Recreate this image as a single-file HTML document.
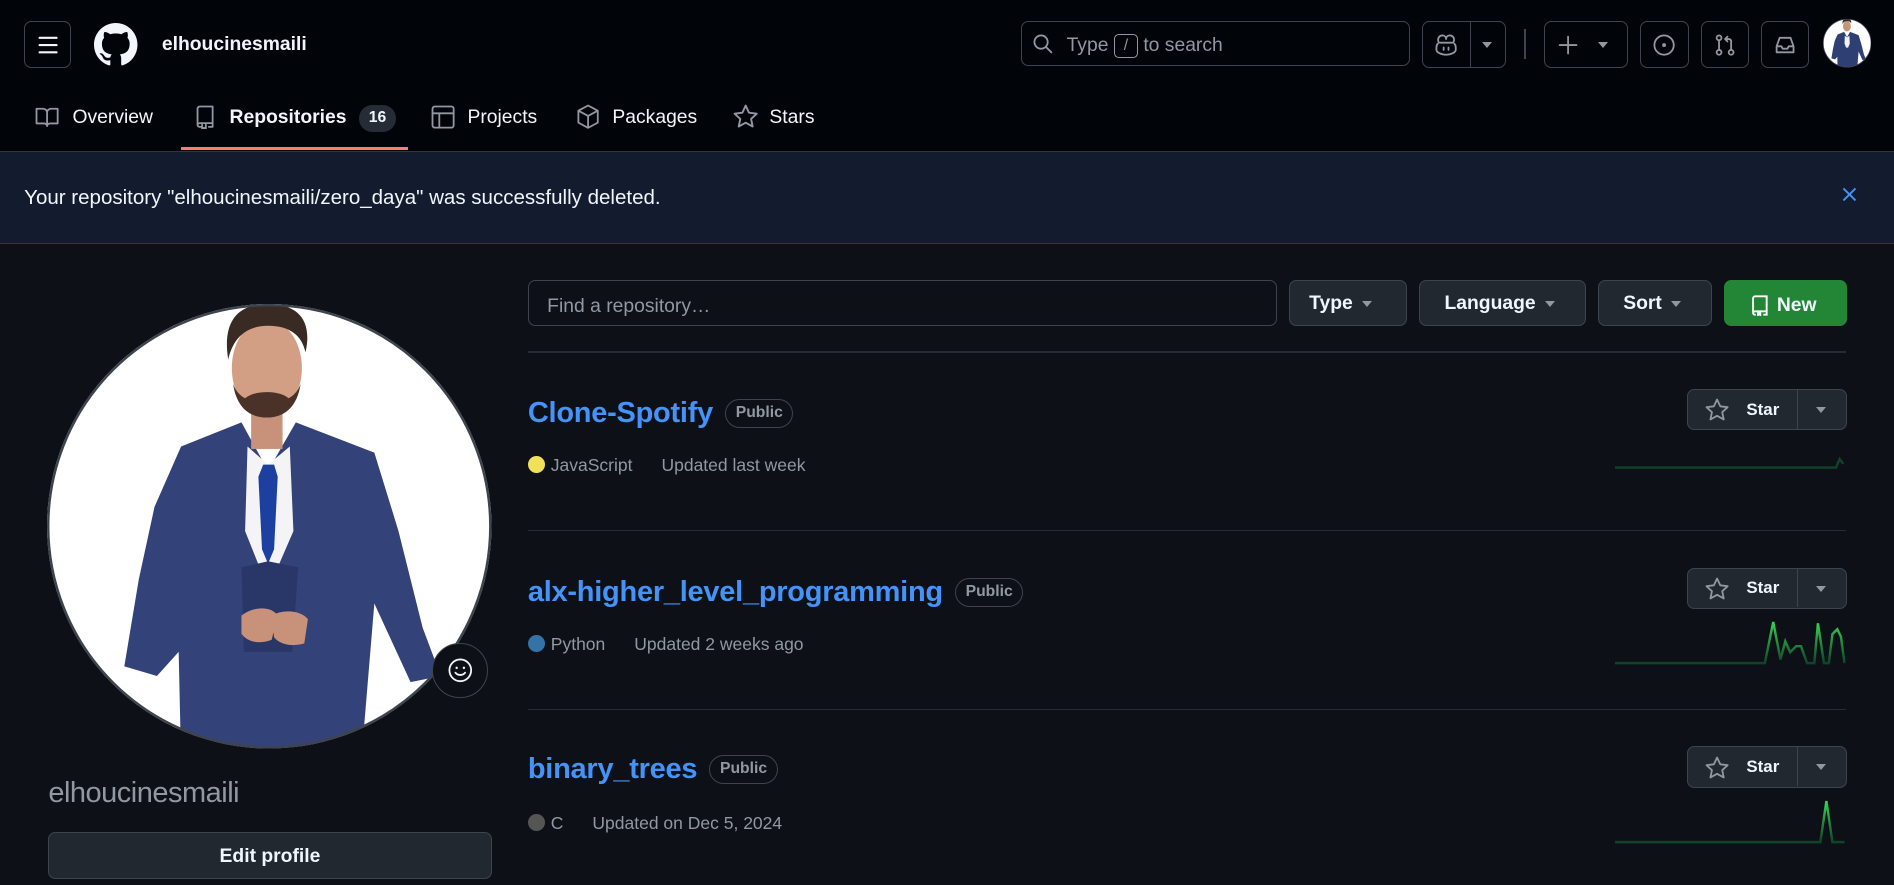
<!DOCTYPE html>
<html><head><meta charset="utf-8"><style>
html{zoom:1.2079}
*{box-sizing:border-box;margin:0;padding:0}
body{width:1568px;height:733px;overflow:hidden;background:#0d1117;font-family:"Liberation Sans",sans-serif;color:#f0f6fc;position:relative}
.abs{position:absolute}
.hdr{position:absolute;left:0;top:0;width:1568px;height:126px;background:#010409;border-bottom:1px solid #30363d}
.btn{position:absolute;border:1px solid #3d444d;border-radius:6px}
.ic{stroke:#9198a1;fill:none;stroke-width:1.5;stroke-linecap:round;stroke-linejoin:round}
.tab{position:absolute;top:88px;font-size:16px;color:#f0f6fc;height:20px;line-height:20px}
.banner{position:absolute;left:0;top:126px;width:1568px;height:76px;background:#131c2e;border-bottom:1px solid #1f3a5f}
.gbtn{position:absolute;top:232px;height:38px;background:#212830;border:1px solid #3d444d;border-radius:6px;font-size:16px;font-weight:bold;color:#f0f6fc;line-height:38px;padding-left:16px}
.caret{display:inline-block;width:0;height:0;border-left:4.5px solid transparent;border-right:4.5px solid transparent;border-top:5px solid #9198a1;vertical-align:middle;margin-left:8px}
.hr{position:absolute;left:437px;width:1091px;height:1px;background:#262c36}
.title{position:absolute;left:437px;font-size:24px;font-weight:bold;color:#4493f8;height:30px;line-height:30px;letter-spacing:-.2px}
.pub{display:inline-block;vertical-align:4px;margin-left:10px;border:1px solid #3d444d;border-radius:12px;font-size:13px;font-weight:bold;color:#9198a1;padding:0 8px;height:24px;line-height:22px;letter-spacing:0}
.meta{position:absolute;left:437px;font-size:14.5px;color:#9198a1;height:20px;line-height:20px}
.dot{display:inline-block;width:14px;height:14px;border-radius:50%;vertical-align:-2px;margin-right:5px}
.star{position:absolute;left:1397px;width:132px;height:34px;background:#212830;border:1px solid #3d444d;border-radius:6px}
.star .sep{position:absolute;left:90px;top:0;width:1px;height:32px;background:#3d444d}
.star span{position:absolute;left:48px;top:8px;font-size:14px;font-weight:bold}
.star .caret{position:absolute;left:106px;top:14px;margin:0}
</style></head><body>
<div class="hdr"></div>
<div class="btn" style="left:20px;top:17px;width:39px;height:39px"></div>
<svg class="abs" style="left:30px;top:27px" width="20" height="20"><path class="ic" d="M3 4h14M3 10h14M3 16h14" style="stroke:#f0f6fc;stroke-width:1.8"/></svg>
<svg class="abs" style="left:78px;top:19px" width="36" height="36" viewBox="0 0 16 16"><path fill="#f0f6fc" d="M8 0C3.58 0 0 3.58 0 8c0 3.540 2.29 6.53 5.47 7.59.4.07.55-.17.55-.38 0-.19-.01-.82-.01-1.49-2.01.37-2.530-.49-2.690-.94-.09-.23-.48-.94-.82-1.13-.28-.15-.68-.52-.01-.53.63-.01 1.08.58 1.23.82.72 1.21 1.87.87 2.33.66.07-.52.28-.87.51-1.070-1.78-.2-3.64-.89-3.64-3.95 0-.87.31-1.59.82-2.15-.08-.2-.36-1.02.08-2.12 0 0 .67-.21 2.2.82.64-.18 1.32-.27 2-.27.68 0 1.36.09 2 .27 1.53-1.04 2.2-.82 2.2-.82.44 1.1.16 1.92.08 2.12.51.56.82 1.27.82 2.15 0 3.07-1.87 3.75-3.65 3.95.29.25.54.73.54 1.48 0 1.07-.01 1.93-.01 2.2 0 .21.15.46.55.38A8.013 8.013 0 0016 8c0-4.42-3.58-8-8-8z"/></svg>
<div class="abs" style="left:134px;top:27px;font-size:16px;font-weight:bold;line-height:20px">elhoucinesmaili</div>
<div class="btn" style="left:845px;top:17px;width:322px;height:38px"></div>
<svg class="abs" style="left:854px;top:27px" width="18" height="18"><circle class="ic" cx="7.5" cy="7.5" r="5.5"/><path class="ic" d="M11.5 11.5l4.5 4.5"/></svg>
<div class="abs" style="left:883px;top:28px;font-size:16px;color:#9198a1;line-height:20px">Type <span style="display:inline-block;border:1px solid #9198a1;border-radius:4px;width:20px;height:20px;line-height:18px;text-align:center;font-size:13px;vertical-align:1px">/</span> to search</div>
<div class="btn" style="left:1177px;top:17px;width:70px;height:39px"></div>
<div class="abs" style="left:1217px;top:17px;width:1px;height:39px;background:#3d444d"></div>
<svg class="abs" style="left:1187px;top:27px" width="20" height="20" viewBox="0 0 20 20"><path class="ic" d="M4 8c-1.5-3 0-6 3-6 2 0 3 1.5 3 3 0-1.5 1-3 3-3 3 0 4.5 3 3 6M3 9c0 0-1 1-1 3v2c0 2 4 4 8 4s8-2 8-4v-2c0-2-1-3-1-3M5 8h10M8 12v2M12 12v2"/></svg>
<div class="abs caret" style="left:1227px;top:35px;margin:0"></div>
<div class="abs" style="left:1262px;top:24px;width:1px;height:25px;background:#3d444d"></div>
<div class="btn" style="left:1278px;top:17px;width:70px;height:39px"></div>
<svg class="abs" style="left:1288px;top:27px" width="20" height="20"><path class="ic" d="M10 3v14M3 10h14"/></svg>
<div class="abs caret" style="left:1323px;top:35px;margin:0"></div>
<div class="btn" style="left:1358px;top:17px;width:40px;height:39px"></div>
<svg class="abs" style="left:1368px;top:27px" width="20" height="20"><circle class="ic" cx="10" cy="10" r="8"/><circle cx="10" cy="10" r="1.6" fill="#9198a1"/></svg>
<div class="btn" style="left:1408px;top:17px;width:40px;height:39px"></div>
<svg class="abs" style="left:1418px;top:27px" width="20" height="20"><circle class="ic" cx="5" cy="4" r="2"/><circle class="ic" cx="5" cy="16" r="2"/><circle class="ic" cx="15" cy="16" r="2"/><path class="ic" d="M5 6v8M15 14V7c0-1.5-1-2-2-2H10M12 3L10 5l2 2"/></svg>
<div class="btn" style="left:1458px;top:17px;width:40px;height:39px"></div>
<svg class="abs" style="left:1468px;top:27px" width="20" height="20"><path class="ic" d="M3 11l2.5-7h9L17 11v5H3zM3 11h4l1 2h4l1-2h4"/></svg>
<svg class="abs" style="left:1509px;top:16px" width="40" height="40" viewBox="39 252 368 368"><defs><clipPath id="c2"><circle cx="223" cy="436" r="184"/></clipPath></defs><circle cx="223" cy="436" r="184" fill="#fff"/><g clip-path="url(#c2)"><path fill="#2e3f73" d="M150 370L200 350 222 390 245 350 310 375 330 440 350 520 365 560 340 565 310 500 300 620 250 630 150 630 148 540 130 560 103 552 115 480 128 420z"/><path fill="#f2f2f4" d="M205 380L222 392 240 380 243 440 230 470 215 470 203 440z"/><ellipse cx="221" cy="307" rx="30" ry="40" fill="#c89478"/><path fill="#3a2a24" d="M188 292c-4-30 8-42 33-42s37 12 32 36c-5-14-15-18-32-18s-28 8-33 24z"/></g><circle cx="223" cy="436" r="182" fill="none" stroke="#3d444d" stroke-width="6"/></svg>
<svg class="abs" style="left:29px;top:87px" width="20" height="20" viewBox="0 0 16 16"><path class="ic" style="stroke-width:1.2" d="M1 2.5h4.5c1.3 0 2.5 1 2.5 2.5v9c0-1-1-1.8-2-1.8H1zM15 2.5h-4.5C9.2 2.5 8 3.5 8 5v9c0-1 1-1.8 2-1.8h5z"/></svg>
<div class="tab" style="left:60px">Overview</div>
<svg class="abs" style="left:160px;top:87px" width="20" height="20" viewBox="0 0 16 16"><path class="ic" style="stroke-width:1.2" d="M3 13V2.5C3 1.7 3.7 1 4.5 1H13v11H4.5C3.7 12 3 12.6 3 13.3S3.7 14.5 4.5 14.5H5M13 12v2.5h-2.5M6 13v3l1.25-1 1.25 1v-3"/></svg>
<div class="tab" style="left:190px;font-weight:bold">Repositories</div>
<div class="abs" style="left:297px;top:87px;width:31px;height:22px;border-radius:11px;background:#262c36;font-size:13px;font-weight:bold;text-align:center;line-height:22px">16</div>
<div class="abs" style="left:150px;top:122px;width:188px;height:2px;background:#f78166"></div>
<svg class="abs" style="left:357px;top:87px" width="20" height="20" viewBox="0 0 16 16"><rect class="ic" style="stroke-width:1.2" x="1" y="1" width="14" height="14" rx="1.5"/><path class="ic" style="stroke-width:1.2" d="M1 5.5h14M5.5 5.5V15"/></svg>
<div class="tab" style="left:387px">Projects</div>
<svg class="abs" style="left:477px;top:86px" width="20" height="21" viewBox="0 0 16 17"><path class="ic" style="stroke-width:1.2" d="M8 1l6.5 3.5v8L8 16l-6.5-3.5v-8zM1.5 4.5L8 8l6.5-3.5M8 8v8"/></svg>
<div class="tab" style="left:507px">Packages</div>
<svg class="abs" style="left:607px;top:86px" width="21" height="21" viewBox="0 0 16 16"><path class="ic" style="stroke-width:1.2" d="M8 1l2.1 4.5 4.9.6-3.6 3.3 1 4.8L8 11.8l-4.4 2.4 1-4.8L1 6.1l4.9-.6z"/></svg>
<div class="tab" style="left:637px">Stars</div>
<div class="banner"></div>
<div class="abs" style="left:20px;top:154px;font-size:17px;line-height:20px">Your repository "elhoucinesmaili/zero_daya" was successfully deleted.</div>
<svg class="abs" style="left:1524px;top:154px" width="14" height="14"><path d="M2 2l10 10M12 2L2 12" stroke="#4493f8" stroke-width="1.6"/></svg>
<svg class="abs" style="left:39px;top:252px" width="370" height="370" viewBox="39 252 370 370"><defs><clipPath id="c1"><circle cx="223" cy="436" r="184"/></clipPath></defs><circle cx="223" cy="436" r="184" fill="#fff"/><g clip-path="url(#c1)">
<path fill="#34427a" d="M150 370L200 350 222 390 245 350 310 375 330 440 350 520 365 560 340 565 310 500 300 620 250 630 150 630 148 540 130 560 103 552 115 480 128 420z"/>
<path fill="#f4f4f7" d="M205 370L222 385 240 370 243 440 230 470 215 470 203 440z"/>
<path fill="#1c3fa0" d="M218 385h9l3 10-3 60-5 12-5-12-3-60z"/>
<path fill="#283768" d="M200 470l22 -5 25 5-5 70h-40z"/>
<rect x="208" y="330" width="26" height="42" fill="#c8927a"/>
<ellipse cx="221" cy="305" rx="29" ry="40" fill="#d29e84"/>
<path fill="#4a3228" d="M193 318c3 20 14 28 28 28s25-8 28-28c-2 6-6 10-10 12-5-4-12-5-18-5s-13 1-18 5c-4-2-8-6-10-12z"/>
<path fill="#3a2a24" d="M189 298c-5-32 8-46 33-46s37 14 31 40c-3-14-13-22-31-22s-29 10-33 28z"/>
<path fill="#c8927a" d="M200 510c10-8 25-8 30 0l-5 20c-10 4-20 2-25-5zM225 510c10-6 25-4 30 3l-3 20c-10 3-20 1-25-5z"/>
</g><circle cx="223" cy="436" r="183" fill="none" stroke="#3d444d" stroke-width="2"/></svg>
<div class="abs" style="left:358px;top:532px;width:46px;height:46px;border-radius:50%;background:#0d1117;border:1px solid #3d444d"></div>
<svg class="abs" style="left:370px;top:544px" width="22" height="22"><circle class="ic" cx="11" cy="11" r="9" style="stroke:#f0f6fc"/><path class="ic" style="stroke:#f0f6fc" d="M7 13c2 2.5 6 2.5 8 0"/><circle cx="8" cy="9" r="1" fill="#f0f6fc"/><circle cx="14" cy="9" r="1" fill="#f0f6fc"/></svg>
<div class="abs" style="left:40px;top:643px;font-size:24px;font-weight:300;color:#9198a1;line-height:28px;letter-spacing:-.4px">elhoucinesmaili</div>
<div class="abs" style="left:40px;top:689px;width:367px;height:39px;background:#212830;border:1px solid #3d444d;border-radius:6px;text-align:center;font-size:16px;font-weight:bold;line-height:40px">Edit profile</div>
<div class="abs" style="left:437px;top:232px;width:620px;height:38px;border:1px solid #3d444d;border-radius:6px;background:#0d1117"></div>
<div class="abs" style="left:453px;top:244px;font-size:16px;color:#9198a1;line-height:20px">Find a repository…</div>
<div class="gbtn" style="left:1067px;width:98px">Type<span class="caret"></span></div>
<div class="gbtn" style="left:1175px;width:138px;padding-left:20px">Language<span class="caret"></span></div>
<div class="gbtn" style="left:1323px;width:94px;padding-left:20px">Sort<span class="caret"></span></div>
<div class="abs" style="left:1427px;top:232px;width:102px;height:38px;background:#238636;border-radius:6px"></div>
<svg class="abs" style="left:1448px;top:244px" width="18" height="18" viewBox="0 0 16 16"><path d="M3 13V2.5C3 1.7 3.7 1 4.5 1H13v11H4.5C3.7 12 3 12.6 3 13.3S3.7 14.5 4.5 14.5H5M13 12v2.5h-2.5" fill="none" stroke="#fff" stroke-width="1.4"/><path d="M6 12.5h3v3.5l-1.5-1-1.5 1z" fill="#fff"/></svg>
<div class="abs" style="left:1471px;top:243px;font-size:16px;font-weight:bold;line-height:20px">New</div>
<div class="hr" style="top:291px"></div>
<div class="title" style="top:327px">Clone-Spotify<span class="pub">Public</span></div>
<div class="meta" style="top:375px"><span class="dot" style="background:#f1e05a"></span>JavaScript<span style="margin-left:24px">Updated last week</span></div>
<div class="star" style="top:322px"><svg class="abs" style="left:14px;top:7px" width="20" height="20" viewBox="0 0 16 16"><path class="ic" style="stroke-width:1.2" d="M8 1l2.1 4.5 4.9.6-3.6 3.3 1 4.8L8 11.8l-4.4 2.4 1-4.8L1 6.1l4.9-.6z"/></svg><span>Star</span><div class="sep"></div><div class="caret"></div></div>
<svg class="abs" style="left:1337px;top:370px" width="192" height="22"><polyline points="0,17 183,17 186,10 189,14" fill="none" stroke="#0e4429" stroke-width="2"/></svg>
<div class="hr" style="top:439px"></div>
<div class="title" style="top:475px">alx-higher_level_programming<span class="pub">Public</span></div>
<div class="meta" style="top:523px"><span class="dot" style="background:#3572a5"></span>Python<span style="margin-left:24px">Updated 2 weeks ago</span></div>
<div class="star" style="top:470px"><svg class="abs" style="left:14px;top:7px" width="20" height="20" viewBox="0 0 16 16"><path class="ic" style="stroke-width:1.2" d="M8 1l2.1 4.5 4.9.6-3.6 3.3 1 4.8L8 11.8l-4.4 2.4 1-4.8L1 6.1l4.9-.6z"/></svg><span>Star</span><div class="sep"></div><div class="caret"></div></div>
<svg class="abs" style="left:1337px;top:510px" width="192" height="42"><defs><linearGradient id="g" x1="0" y1="0" x2="0" y2="1"><stop offset="0" stop-color="#39d353"/><stop offset="1" stop-color="#0e4429"/></linearGradient></defs><polyline points="0,39 124,39 131,5 137,36 141,21 145,30 150,25 154,25 159,39 165,39 168,6 173,39 177,39 180,15 184,11 187,17 190,39" fill="none" stroke="url(#g)" stroke-width="2"/></svg>
<div class="hr" style="top:587px"></div>
<div class="title" style="top:622px">binary_trees<span class="pub">Public</span></div>
<div class="meta" style="top:671px"><span class="dot" style="background:#555"></span>C<span style="margin-left:24px">Updated on Dec 5, 2024</span></div>
<div class="star" style="top:618px"><svg class="abs" style="left:14px;top:7px" width="20" height="20" viewBox="0 0 16 16"><path class="ic" style="stroke-width:1.2" d="M8 1l2.1 4.5 4.9.6-3.6 3.3 1 4.8L8 11.8l-4.4 2.4 1-4.8L1 6.1l4.9-.6z"/></svg><span>Star</span><div class="sep"></div><div class="caret"></div></div>
<svg class="abs" style="left:1337px;top:658px" width="192" height="42"><defs><linearGradient id="g3" x1="0" y1="0" x2="0" y2="1"><stop offset="0" stop-color="#39d353"/><stop offset="1" stop-color="#0e4429"/></linearGradient></defs><polyline points="0,39 170,39 175,5 180,39 190,39" fill="none" stroke="url(#g3)" stroke-width="2"/></svg>
</body></html>
